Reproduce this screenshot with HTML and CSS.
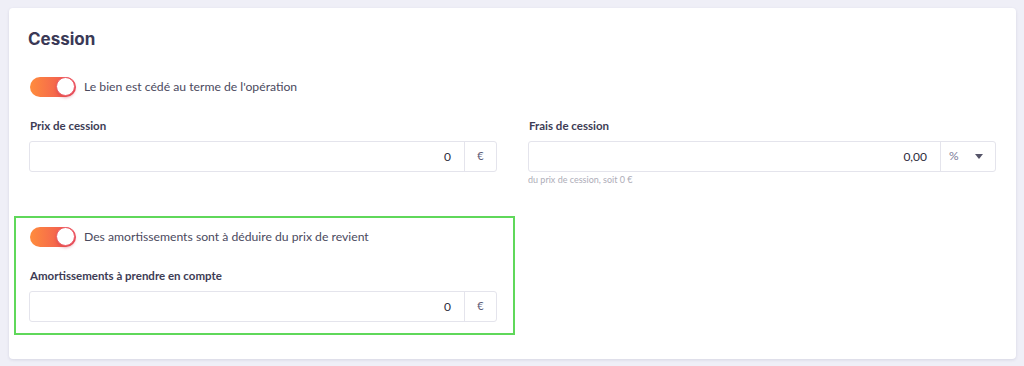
FILE: index.html
```html
<!DOCTYPE html>
<html lang="fr">
<head>
	<meta charset="UTF-8">
	<title>Cession</title>
	<link rel="stylesheet" href="styles.css">
</head>
<body>
	<section class="card">
		<h2 class="card-title">Cession</h2>

		<label class="switch-row">
			<span class="switch"><span class="knob"></span></span>
			<span class="switch-label">Le bien est cédé au terme de l'opération</span>
		</label>

		<div class="fields">
			<div class="field">
				<div class="field-label">Prix de cession</div>
				<div class="input-group">
					<div class="input-value">0</div>
					<div class="addon">€</div>
				</div>
			</div>
			<div class="field">
				<div class="field-label">Frais de cession</div>
				<div class="input-group">
					<div class="input-value">0,00</div>
					<div class="addon addon-select">
						<span>%</span>
						<span class="caret"></span>
					</div>
				</div>
				<div class="help">du prix de cession, soit 0 €</div>
			</div>

			<div class="highlight">
				<label class="switch-row">
					<span class="switch"><span class="knob"></span></span>
					<span class="switch-label">Des amortissements sont à déduire du prix de revient</span>
				</label>
				<div class="field field-inner">
					<div class="field-label">Amortissements à prendre en compte</div>
					<div class="input-group">
						<div class="input-value">0</div>
						<div class="addon">€</div>
					</div>
				</div>
			</div>
		</div>
	</section>
</body>
</html>
```

FILE: styles.css
```css
html,body {
	margin:0;
	padding:0;
}

body {
	background:#efeff7;
	padding:8px 8px 9px 9px;
	font-family:"Lato","Liberation Sans",sans-serif;
	color:#4b4a5e;
}

.card {
	background:#fff;
	border-radius:4px;
	box-shadow:0 1px 3px rgba(40,40,90,.12);
	padding:19px 20px 24px 20px;
}

.card-title {
	margin:0 0 26px -1px;
	font-family:"Inter",sans-serif;
	font-weight:700;
	font-size:17px;
	line-height:24px;
	color:#3a3956;
}

.switch-row {
	display:flex;
	align-items:center;
	gap:8px;
	margin-left:1px;
}

.switch {
	position:relative;
	width:46px;
	height:20px;
	border-radius:10px;
	background:linear-gradient(90deg,#ff8c3c 0%,#f4664e 60%,#ee4d5c 100%);
}

.knob {
	position:absolute;
	left:26px;
	top:0;
	width:17px;
	height:17px;
	border-radius:50%;
	background:#fff;
	border:1.5px solid #ec5d68;
	box-shadow:0 2px 3px rgba(200,50,70,.35);
}

.switch-label {
	font-size:12.2px;
	line-height:20px;
}

.fields {
	display:grid;
	grid-template-columns:1fr 1fr;
	column-gap:31px;
	margin-top:21px;
}

.field-label {
	font-size:11.5px;
	font-weight:700;
	line-height:16px;
	color:#3d3c55;
	margin:0 0 7px 1px;
}

.input-group {
	display:flex;
	height:29px;
	border:1px solid #e4e4ec;
	border-radius:3px;
}

.input-value {
	flex:1;
	text-align:right;
	font-size:12px;
	line-height:29px;
	padding-right:13px;
	color:#2e2d40;
}

.addon {
	width:31px;
	border-left:1px solid #e4e4ec;
	text-align:center;
	font-size:11px;
	line-height:27px;
	color:#5e5d78;
}

.addon-select {
	width:55px;
	display:flex;
	align-items:center;
	justify-content:space-between;
	padding:0 12px 0 8px;
	box-sizing:border-box;
	color:#7c7b99;
	font-size:12px;
}

.addon-select span:first-child {
	margin-top:-3px;
}

.caret {
	width:0;
	height:0;
	border-left:4px solid transparent;
	border-right:4px solid transparent;
	border-top:5px solid #555468;
}

.help {
	font-size:9px;
	line-height:12px;
	color:#aeadb8;
	margin-top:2px;
}

.highlight {
	grid-column:1;
	margin:30px -18px 0 -15px;
	border:2px solid #5fd85a;
	padding:9px 16px 11px 13px;
}

.field-inner {
	margin-top:21px;
}
```
